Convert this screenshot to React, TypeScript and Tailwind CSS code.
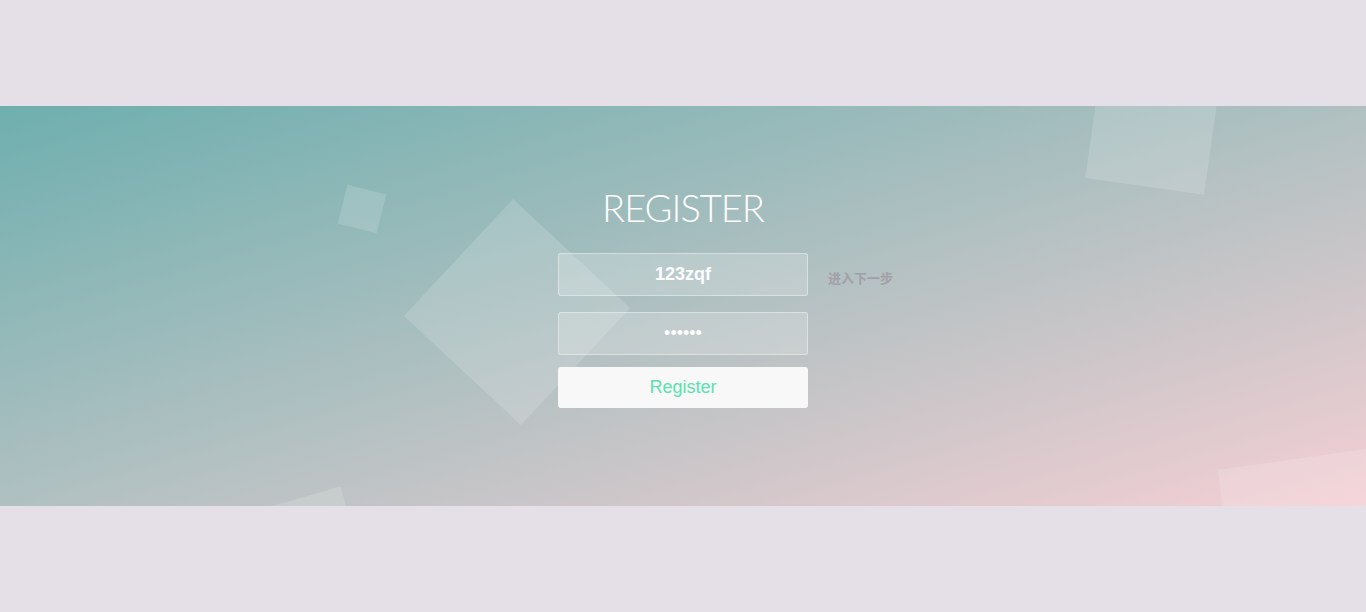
import { useState } from 'react'

const squares = [
  'left-[342px] top-[83px] w-[40px] h-[40px] rotate-[14deg]',
  'left-[437px] top-[126px] w-[160px] h-[160px] rotate-[43deg]',
  'left-[1093px] top-[-39px] w-[120px] h-[120px] rotate-[8deg]',
  'left-[1228px] top-[352px] w-[160px] h-[160px] rotate-[-8deg]',
  'left-[273px] top-[390px] w-[80px] h-[80px] rotate-[-16deg]',
]

export default function App() {
  const [user, setUser] = useState('123zqf')
  const [pass, setPass] = useState('123456')

  return (
    <div className="min-h-screen bg-[#e5e0e7] flex items-center" style={{ fontFamily: '"Liberation Sans", Arial, sans-serif' }}>
      <div className="relative w-full h-[400px] overflow-hidden bg-[linear-gradient(to_bottom_right,#6eafae_0%,#b0c0c1_50%,#f4cfd4_100%)]">
        {squares.map((s) => (
          <div key={s} className={`absolute bg-white/15 ${s}`} />
        ))}

        <div className="relative flex flex-col items-center pt-[78px]">
          <h1
            className="text-[38px] leading-[46px] font-light text-white tracking-[-1px]"
            style={{ fontFamily: 'Lato, "Open Sans", sans-serif' }}
          >
            REGISTER
          </h1>

          <form className="mt-[23px] flex flex-col items-center" onSubmit={(e) => e.preventDefault()}>
            <div className="relative">
              <input
                type="text"
                value={user}
                onChange={(e) => setUser(e.target.value)}
                className="w-[250px] h-[43px] px-[15px] rounded-[3px] border border-white/40 bg-white/20 text-white text-[18px] font-bold text-center outline-none"
              />
              <span
                className="absolute left-full top-[16px] ml-[20px] whitespace-nowrap text-[13px] leading-[18px] font-bold text-[#a19fa7]"
                style={{ fontFamily: '"Noto Sans CJK SC", sans-serif' }}
              >
                进入下一步
              </span>
            </div>
            <input
              type="password"
              value={pass}
              onChange={(e) => setPass(e.target.value)}
              className="mt-[16px] w-[250px] h-[43px] px-[15px] rounded-[3px] border border-white/40 bg-white/20 text-white text-[18px] text-center outline-none"
            />
            <button
              type="submit"
              className="mt-[12px] w-[250px] h-[41px] rounded-[3px] bg-[#f8f8f8] text-[#5fe0ad] text-[18px]"
            >
              Register
            </button>
          </form>
        </div>
      </div>
    </div>
  )
}
